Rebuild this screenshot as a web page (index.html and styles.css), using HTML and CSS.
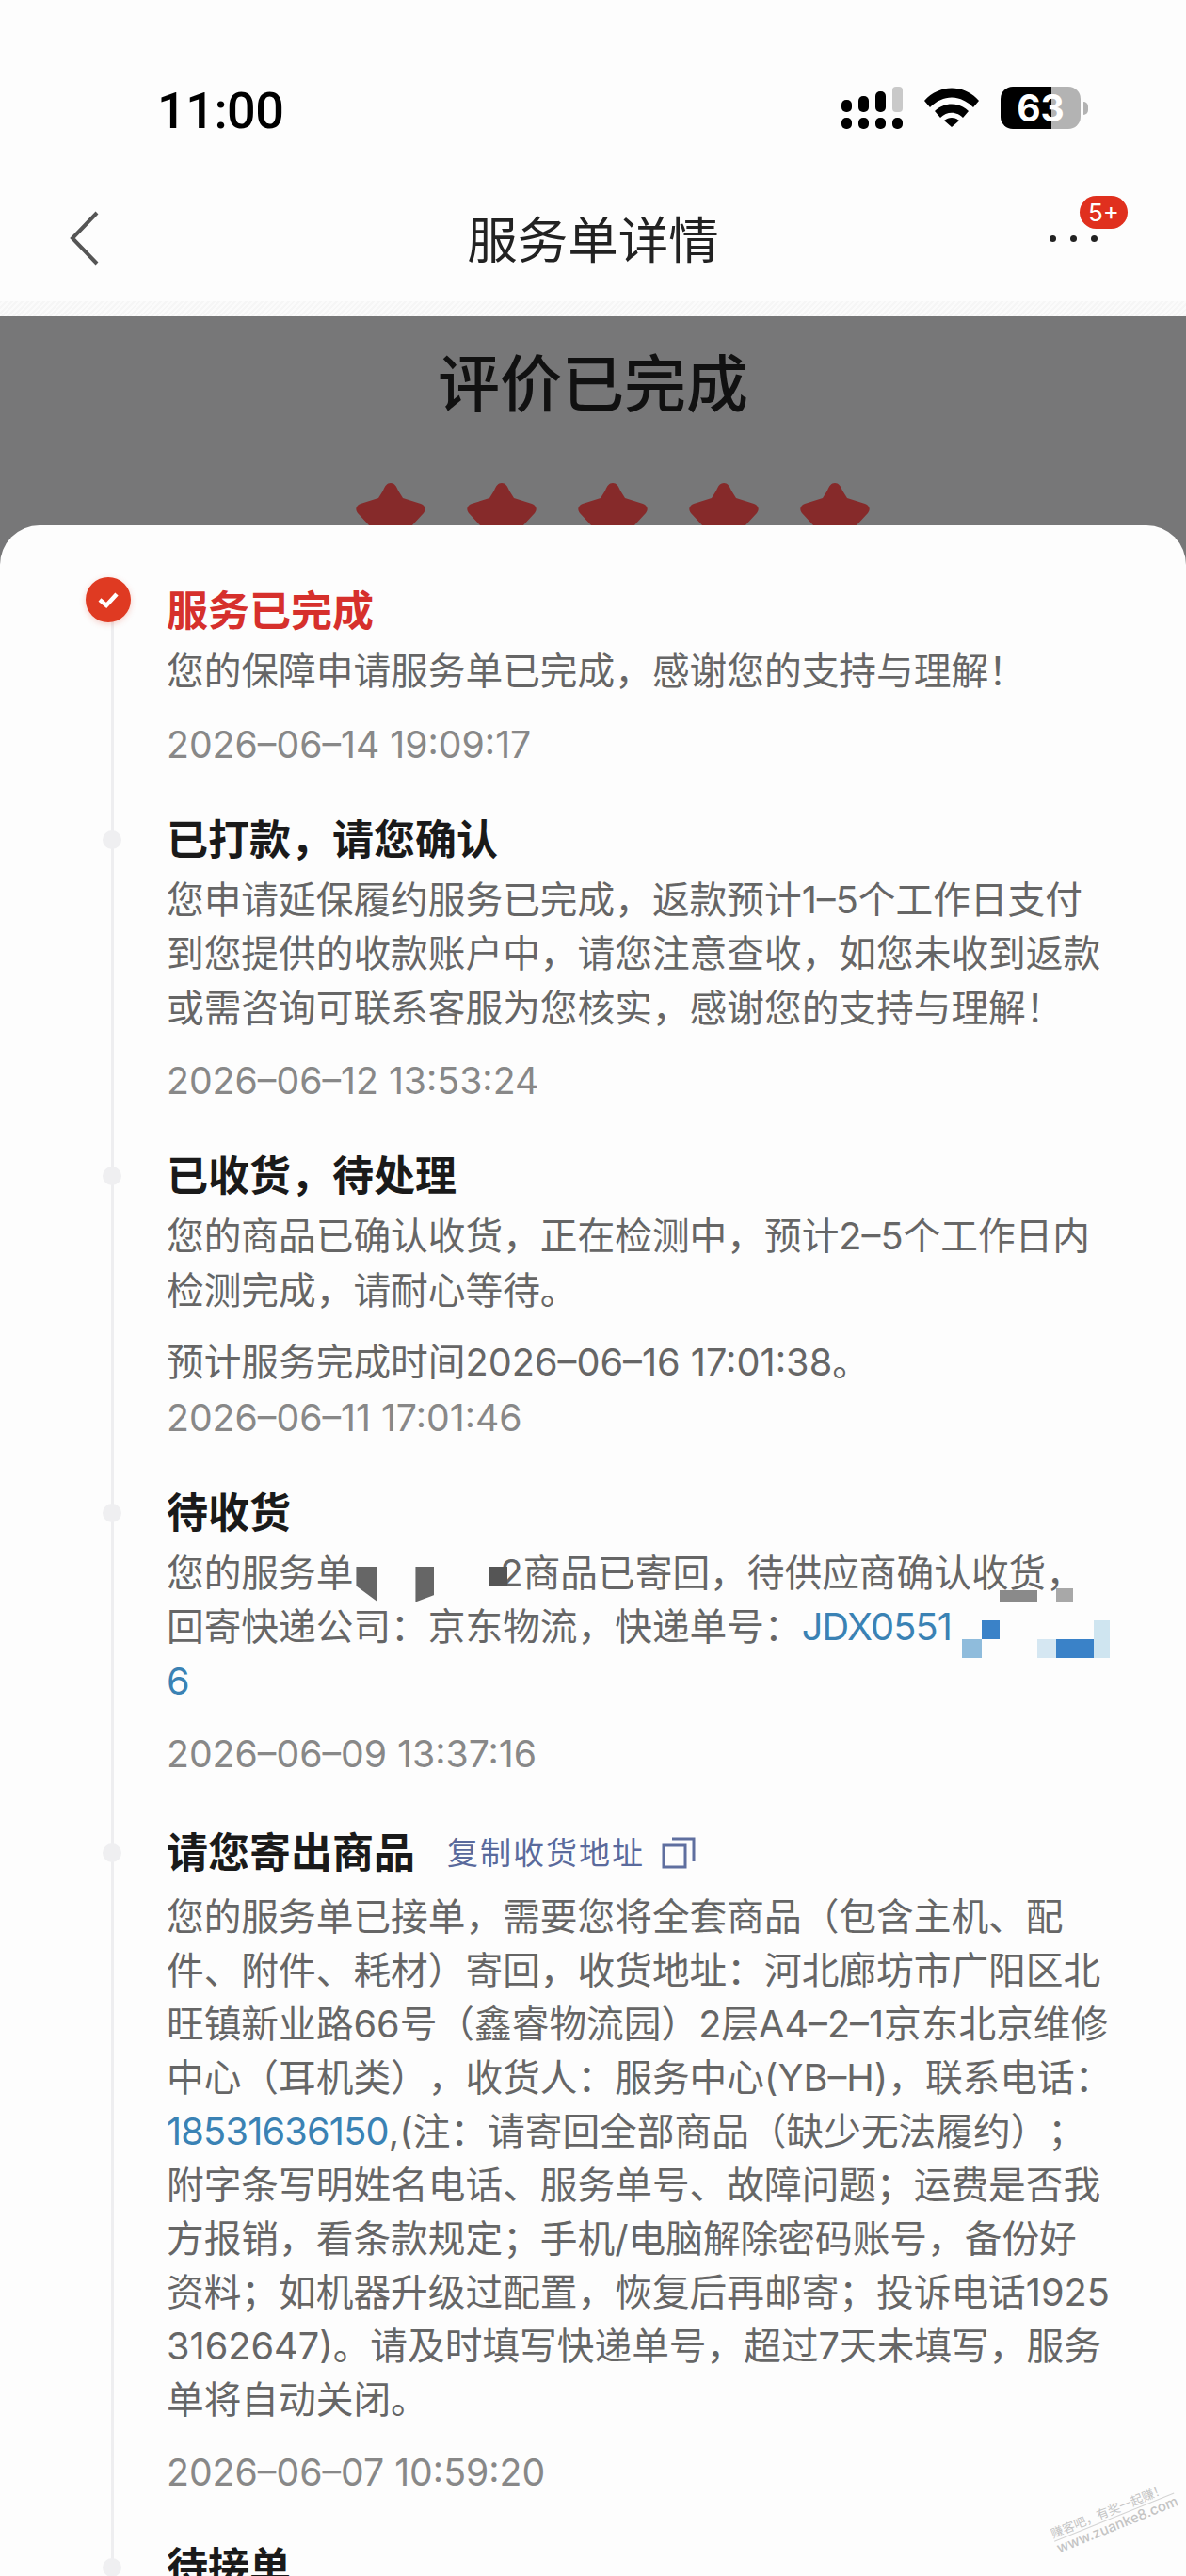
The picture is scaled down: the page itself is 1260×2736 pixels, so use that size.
FILE: index.html
```html
<!DOCTYPE html>
<html lang="zh-CN">

<head>
	<meta charset="utf-8">
	<title>服务单详情</title>
	<meta name="viewport" content="width=device-width, initial-scale=1">
	<link rel="stylesheet" href="styles.css">
</head>

<body>
	<header class='top'>
		<div class='status'>
			<span class='status__time'>11:00</span>
			<div class='status__icons'>
				<svg class='status__signal' width='66' height='46' viewBox='0 0 66 46'>
					<rect x='0' y='14' width='11' height='13' rx='5' fill='#000'/>
					<rect x='18' y='10' width='11' height='17' rx='5' fill='#000'/>
					<rect x='36' y='5' width='11' height='22' rx='5' fill='#000'/>
					<rect x='54' y='0' width='11' height='27' rx='4' fill='#c9c9c9'/>
					<rect x='0' y='33' width='11' height='12' rx='5' fill='#000'/>
					<rect x='18' y='33' width='11' height='12' rx='5' fill='#000'/>
					<rect x='36' y='33' width='11' height='12' rx='5' fill='#000'/>
					<rect x='54' y='33' width='11' height='12' rx='5' fill='#000'/>
				</svg>
				<svg class='status__wifi' width='58' height='42' viewBox='0 0 58 42'>
					<path d='M0 14 C16 -4 42 -4 58 14 L52 21 C38 7 20 7 6 21 Z' fill='#000'/>
					<path d='M11 25 C21 15 37 15 47 25 L41 32 C34 25 24 25 17 32 Z' fill='#000'/>
					<path d='M21 35 C26 31 32 31 37 35 L29 42 Z' fill='#000'/>
				</svg>
				<div class='battery'>
					<span class='battery__level'>63</span>
				</div>
				<span class='battery__cap'></span>
			</div>
		</div>
		<nav class='nav'>
			<svg class='nav__back' width='32' height='58' viewBox='0 0 32 58'>
				<path d='M29 2 L3 29 L29 56' fill='none' stroke='#555' stroke-width='4'/>
			</svg>
			<h1 class='nav__title'>服务单详情</h1>
			<div class='nav__more'>
				<i></i><i></i><i></i>
				<span class='nav__badge'>5+</span>
			</div>
		</nav>
		<div class='top__hatch'></div>
	</header>

	<section class='rating'>
		<h2 class='rating__title'>评价已完成</h2>
		<div class='rating__stars'>
			<svg class='star' width='74' height='70' viewBox='0 0 74 70'><use href='#star'/></svg>
			<svg class='star' width='74' height='70' viewBox='0 0 74 70'><use href='#star'/></svg>
			<svg class='star' width='74' height='70' viewBox='0 0 74 70'><use href='#star'/></svg>
			<svg class='star' width='74' height='70' viewBox='0 0 74 70'><use href='#star'/></svg>
			<svg class='star' width='74' height='70' viewBox='0 0 74 70'><use href='#star'/></svg>
		</div>
		<svg width='0' height='0' class='defs'>
			<defs>
				<path id='star' fill='#862a2a' d='M37 0 C41 0 43 3 45 8 L50 16 L69 22 C74 24 75 28 72 32 L59 46 L59 62 C59 68 55 70 50 68 L37 63 L24 68 C19 70 15 68 15 62 L15 46 L2 32 C-1 28 0 24 5 22 L24 16 L29 8 C31 3 33 0 37 0 Z'/>
			</defs>
		</svg>
	</section>

	<main class='card'>
		<div class='step step--done'>
			<span class='step__check'>
				<svg width='24' height='20' viewBox='0 0 24 20'>
					<path d='M3 10 L10 16 L21 4' fill='none' stroke='#fff' stroke-width='4.5'/>
				</svg>
			</span>
			<h3 class='step__title'>服务已完成</h3>
			<p class='step__desc'>您的保障申请服务单已完成，感谢您的支持与理解！</p>
			<p class='step__time'>2026–06–14 19:09:17</p>
		</div>

		<div class='step'>
			<h3 class='step__title'>已打款，请您确认</h3>
			<p class='step__desc'>您申请延保履约服务已完成，返款预计1–5个工作日支付<br>到您提供的收款账户中，请您注意查收，如您未收到返款<br>或需咨询可联系客服为您核实，感谢您的支持与理解！</p>
			<p class='step__time'>2026–06–12 13:53:24</p>
		</div>

		<div class='step'>
			<h3 class='step__title'>已收货，待处理</h3>
			<p class='step__desc'>您的商品已确认收货，正在检测中，预计2–5个工作日内<br>检测完成，请耐心等待。</p>
			<p class='step__note'>预计服务完成时间2026–06–16 17:01:38。</p>
			<p class='step__time step__time--tight'>2026–06–11 17:01:46</p>
		</div>

		<div class='step step--shipped'>
			<h3 class='step__title'>待收货</h3>
			<p class='step__desc'>您的服务单<span class='mask mask--order'><i class='mask__a'></i><i class='mask__b'></i><i class='mask__c'></i></span>2商品已寄回，待供应商确认收货，<br>回寄快递公司：京东物流，快递单号：<a class='link'>JDX0551</a><span class='mask mask--track'><i class='mask__d'></i><i class='mask__e'></i><i class='mask__f'></i><i class='mask__g'></i><i class='mask__h'></i><i class='mask__i'></i><i class='mask__j'></i></span><br><a class='link'>6</a></p>
			<p class='step__time'>2026–06–09 13:37:16</p>
		</div>

		<div class='step step--send'>
			<h3 class='step__title'>请您寄出商品<span class='copy'>复制收货地址<svg class='copy__icon' width='36' height='34' viewBox='0 0 36 34'>
				<rect x='2' y='9' width='23' height='23' fill='none' stroke='#5f6f9f' stroke-width='3'/>
				<path d='M11 2 H34 V26' fill='none' stroke='#5f6f9f' stroke-width='3'/>
			</svg></span></h3>
			<p class='step__desc'>您的服务单已接单，需要您将全套商品（包含主机、配<br>件、附件、耗材）寄回，收货地址：河北廊坊市广阳区北<br>旺镇新业路66号（鑫睿物流园）2层A4–2–1京东北京维修<br>中心（耳机类），收货人：服务中心(YB–H)，联系电话：<br><a class='link'>18531636150</a>,(注：请寄回全部商品（缺少无法履约）；<br>附字条写明姓名电话、服务单号、故障问题；运费是否我<br>方报销，看条款规定；手机/电脑解除密码账号，备份好<br>资料；如机器升级过配置，恢复后再邮寄；投诉电话1925<br>3162647)。请及时填写快递单号，超过7天未填写，服务<br>单将自动关闭。</p>
			<p class='step__time'>2026–06–07 10:59:20</p>
		</div>

		<div class='step'>
			<h3 class='step__title'>待接单</h3>
		</div>

		<div class='mark'>
			<span class='mark__cn'>赚客吧，有奖一起赚！</span>
			<span class='mark__en'>www.zuanke8.com</span>
		</div>
	</main>
</body>

</html>
```

FILE: styles.css
```css
* {
	box-sizing: border-box;
}

html,
body {
	margin: 0;
	padding: 0;
}

body {
	width: 1260px;
	height: 2736px;
	overflow: hidden;
	background-color: #fdfdfd;
	font-family: Inter, "Noto Sans CJK SC", sans-serif;
	text-spacing-trim: space-all;
}

h1,
h2,
h3,
p {
	margin: 0;
}

i {
	display: block;
}

/* top bar */
.top {
	height: 336px;
	background-color: #fdfdfd;
}

.status {
	height: 192px;
	padding: 92px 104px 0 167px;
	display: flex;
	justify-content: space-between;
	align-items: flex-start;
}

.status__time {
	font-size: 54px;
	line-height: 48px;
	font-weight: 500;
	letter-spacing: -0.5px;
	color: #000;
	padding-top: 2px;
	font-family: Roboto, sans-serif;
}

.status__icons {
	display: flex;
	align-items: flex-start;
}

.status__signal {
	display: block;
}

.status__wifi {
	display: block;
	margin: 1px 0 0 22px;
}

.battery {
	width: 85px;
	height: 45px;
	margin-left: 23px;
	border-radius: 13px;
	background: linear-gradient(90deg, #000 0, #000 54px, #b3b3b3 54px);
	text-align: center;
}

.battery__level {
	font-family: Inter, sans-serif;
	font-size: 39px;
	line-height: 45px;
	font-weight: 700;
	color: #fff;
}

.battery__cap {
	width: 5px;
	height: 14px;
	margin: 16px 0 0 3px;
	border-radius: 0 5px 5px 0;
	background-color: #b3b3b3;
}

.nav {
	position: relative;
	height: 128px;
	display: flex;
	justify-content: center;
	align-items: center;
}

.nav__back {
	position: absolute;
	left: 74px;
	top: 32px;
}

.nav__title {
	font-size: 53.5px;
	line-height: 64px;
	font-weight: 400;
	color: #222;
}

.nav__more {
	position: absolute;
	left: 1115px;
	top: 58px;
	width: 51px;
	display: flex;
	justify-content: space-between;
}

.nav__more i {
	width: 7px;
	height: 7px;
	border-radius: 50%;
	background-color: #222;
}

.nav__badge {
	position: absolute;
	left: 32px;
	top: -42px;
	width: 51px;
	height: 35px;
	border-radius: 18px;
	background-color: #e0301e;
	color: #fff;
	font-size: 26px;
	line-height: 35px;
	text-align: center;
}

.top__hatch {
	height: 16px;
	background: repeating-linear-gradient(135deg, #f6f6f6 0, #f6f6f6 2px, #fbfbfb 2px, #fbfbfb 4px);
}

/* dimmed rating, runs on behind the card's round corners */
.rating {
	height: 264px;
	overflow: hidden;
	background-color: #777778;
	text-align: center;
}

.rating__title {
	padding-top: 32px;
	font-size: 66px;
	line-height: 80px;
	font-weight: 500;
	color: #111;
}

.rating__stars {
	margin-top: 65px;
	padding-left: 41px;
	display: flex;
	justify-content: center;
	gap: 44px;
}

.star {
	display: block;
	flex: none;
}

.defs {
	position: absolute;
}

/* timeline card */
.card {
	position: relative;
	height: 2178px;
	margin-top: -42px;
	padding: 59px 80px 0 177px;
	border-radius: 42px 42px 0 0;
	background-color: #fdfdfd;
}

.card::before {
	content: '';
	position: absolute;
	left: 118px;
	top: 90px;
	bottom: 0;
	width: 3px;
	background-color: #eeeef0;
}

.step {
	position: relative;
	margin-bottom: 41px;
}

.step::before {
	content: '';
	position: absolute;
	left: -68px;
	top: 22px;
	width: 20px;
	height: 20px;
	border-radius: 50%;
	background-color: #efeff1;
}

.step--done::before {
	display: none;
}

.step--shipped {
	margin-bottom: 45px;
}

.step__check {
	position: absolute;
	left: -86px;
	top: -4px;
	width: 48px;
	height: 48px;
	border-radius: 50%;
	background-color: #df3a22;
	display: flex;
	justify-content: center;
	align-items: center;
	box-shadow: 0 2px 6px rgba(223, 58, 34, 0.25);
}

.step__title {
	display: flex;
	align-items: center;
	font-size: 44px;
	line-height: 64px;
	font-weight: 700;
	color: #1a1a1a;
	margin-bottom: 4px;
}

.step--done .step__title {
	color: #d6302c;
}

.step--send .step__title {
	margin-bottom: 8px;
}

.step__desc,
.step__note {
	font-size: 39.7px;
	line-height: 57.5px;
	color: #666;
	white-space: nowrap;
}

.step--send .step__desc {
	line-height: 57px;
}

.step__note {
	margin-top: 19px;
}

.step__time {
	margin-top: 19px;
	font-size: 39.2px;
	line-height: 57px;
	color: #888;
}

.step__time--tight {
	margin-top: 0;
}

.link {
	color: #3a82b4;
	letter-spacing: -0.8px;
}

.copy {
	display: inline-flex;
	align-items: center;
	margin-left: 34px;
	font-size: 33px;
	font-weight: 400;
	letter-spacing: 2px;
	color: #5a6a9c;
}

.copy__icon {
	margin-left: 18px;
}

/* mosaic over the order and waybill numbers */
.mask {
	position: relative;
	display: inline-block;
	height: 10px;
}

.mask--order {
	width: 156px;
}

.mask--track {
	width: 165px;
	margin-left: 3px;
}

.mask i {
	position: absolute;
}

.mask__a {
	left: 3px;
	top: -11px;
	width: 23px;
	height: 38px;
	background-color: #666;
	clip-path: polygon(0 0, 100% 0, 100% 100%, 0 55%);
}

.mask__b {
	left: 66px;
	top: -11px;
	width: 20px;
	height: 38px;
	background-color: #666;
	clip-path: polygon(0 0, 100% 0, 100% 80%, 0 100%);
}

.mask__c {
	left: 145px;
	top: -11px;
	width: 19px;
	height: 20px;
	background-color: #555;
}

.mask__d {
	left: 29px;
	top: -11px;
	width: 19px;
	height: 20px;
	background-color: #3a82c8;
}

.mask__e {
	left: 8px;
	top: 9px;
	width: 21px;
	height: 20px;
	background-color: #8fbcdc;
}

.mask__f {
	left: 88px;
	top: 9px;
	width: 20px;
	height: 20px;
	background-color: #d5e7f2;
}

.mask__g {
	left: 108px;
	top: 9px;
	width: 40px;
	height: 20px;
	background-color: #3a82c8;
}

.mask__h {
	left: 148px;
	top: -11px;
	width: 17px;
	height: 40px;
	background-color: #cfe5f0;
}

.mask__i {
	left: 48px;
	top: -43px;
	width: 40px;
	height: 12px;
	background-color: #8a8a8a;
}

.mask__j {
	left: 108px;
	top: -45px;
	width: 18px;
	height: 14px;
	background-color: #a8a8a8;
}

/* forum watermark */
.mark {
	position: absolute;
	left: 1114px;
	top: 2126px;
	display: flex;
	flex-direction: column;
	font-size: 13px;
	line-height: 16px;
	color: #c4c4c4;
	white-space: nowrap;
	transform: rotate(-22deg);
	transform-origin: left top;
}

.mark__cn {
	border-bottom: 1px solid #d4d4d4;
}

.mark__en {
	font-size: 15px;
	font-weight: 500;
}
```
